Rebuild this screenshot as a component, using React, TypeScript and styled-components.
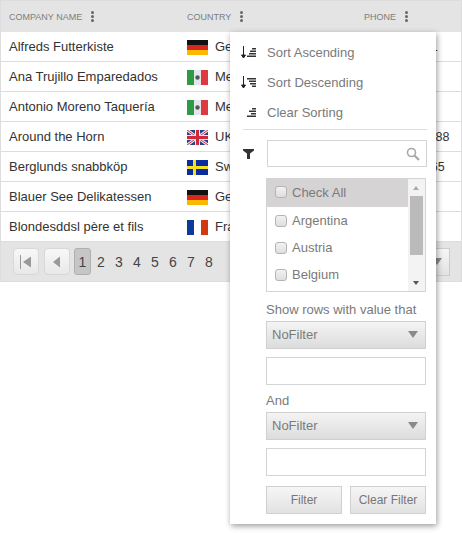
import React from "react";
import styled, { createGlobalStyle } from "styled-components";

const GlobalStyle = createGlobalStyle`
  html, body {
    margin: 0;
    padding: 0;
    background: #fff;
    font-family: "Liberation Sans", Arial, sans-serif;
  }
  * { box-sizing: border-box; }
`;

const customers = [
  { name: "Alfreds Futterkiste", flag: "de", country: "Germany", phone: "030-0074321" },
  { name: "Ana Trujillo Emparedados", flag: "mx", country: "Mexico", phone: "(5) 555-4729" },
  { name: "Antonio Moreno Taquería", flag: "mx", country: "Mexico", phone: "(5) 555-3932" },
  { name: "Around the Horn", flag: "uk", country: "UK", phone: "(171) 555-7788" },
  { name: "Berglunds snabbköp", flag: "se", country: "Sweden", phone: "0921-12 34 65" },
  { name: "Blauer See Delikatessen", flag: "de", country: "Germany", phone: "0621-08460" },
  { name: "Blondesddsl père et fils", flag: "fr", country: "France", phone: "88.60.15.31" },
];

const Page = styled.div`
  position: relative;
  width: 462px;
  height: 533px;
  overflow: hidden;
`;

const Grid = styled.div`
  border: 1px solid #ddd;
  width: 462px;
`;

const HeaderRow = styled.div`
  display: grid;
  grid-template-columns: 178px 177px 1fr;
  height: 31px;
  background: #e4e4e4;
`;

const HeaderCell = styled.div`
  display: flex;
  align-items: center;
  gap: 9px;
  padding-left: 8px;
  font-size: 9px;
  color: #7d7d7d;
`;

const Kebab = styled.span`
  display: flex;
  flex-direction: column;
  gap: 1px;
  i {
    width: 3px;
    height: 3px;
    border-radius: 50%;
    background: #666;
  }
`;

const Row = styled.div`
  display: grid;
  grid-template-columns: 178px 177px 1fr;
  height: 30px;
  border-bottom: 1px solid #ddd;
  font-size: 13px;
  color: #333;
  align-items: center;
`;

const Cell = styled.div`
  display: flex;
  align-items: center;
  padding-left: 8px;
  white-space: nowrap;
  overflow: hidden;
`;

const PhoneCell = styled(Cell)`
  font-size: 12.5px;
`;

const FlagBox = styled.svg`
  display: block;
  width: 21px;
  height: 15px;
  margin: 1px 7px 0 0;
  flex: none;
`;

const Flag = ({ code }: { code: string }) => (
  <FlagBox viewBox="0 0 21 15">
    {code === "de" && (
      <>
        <rect width="21" height="5" fill="#111" />
        <rect y="5" width="21" height="5" fill="#d8281c" />
        <rect y="10" width="21" height="5" fill="#fbb800" />
      </>
    )}
    {code === "mx" && (
      <>
        <rect width="7" height="15" fill="#2f9a46" />
        <rect x="7" width="7" height="15" fill="#e3e6ea" />
        <rect x="14" width="7" height="15" fill="#dc3a40" />
        <circle cx="10.5" cy="7.5" r="2.2" fill="#555" />
      </>
    )}
    {code === "uk" && (
      <>
        <rect width="21" height="15" fill="#2b3f86" />
        <path d="M0 0L21 15M21 0L0 15" stroke="#e8e8ee" strokeWidth="3" />
        <path d="M0 0L21 15M21 0L0 15" stroke="#d0384a" strokeWidth="1" />
        <path d="M10.5 0V15M0 7.5H21" stroke="#e8e8ee" strokeWidth="5" />
        <path d="M10.5 0V15M0 7.5H21" stroke="#d0283a" strokeWidth="3" />
      </>
    )}
    {code === "se" && (
      <>
        <rect width="21" height="15" fill="#0b2c9c" />
        <rect x="6" width="3" height="15" fill="#f5df20" />
        <rect y="6" width="21" height="3" fill="#f5df20" />
      </>
    )}
    {code === "fr" && (
      <>
        <rect width="7" height="15" fill="#0a3a9a" />
        <rect x="7" width="7" height="15" fill="#fff" />
        <rect x="14" width="7" height="15" fill="#d03a10" />
      </>
    )}
  </FlagBox>
);

const Pager = styled.div`
  display: flex;
  align-items: center;
  height: 39px;
  padding: 0 11px 0 12px;
  background: #e4e4e4;
`;

const PagerButton = styled.span`
  display: flex;
  align-items: center;
  justify-content: center;
  width: 26px;
  height: 27px;
  margin-right: 4px;
  border: 1px solid #d8d8d8;
  border-radius: 4px;
  background: linear-gradient(#f8f8f8, #e8e8e8);
  & + & {
    margin-left: 1px;
  }
`;

const PageNumber = styled.span<{ $current?: boolean }>`
  display: flex;
  align-items: center;
  justify-content: center;
  width: ${(p) => (p.$current ? "17px" : "18px")};
  height: 27px;
  margin-right: ${(p) => (p.$current ? "1px" : "0")};
  font-size: 14px;
  color: #444;
  border: ${(p) => (p.$current ? "1px solid #b0b0b0" : "none")};
  border-radius: 3px;
  background: ${(p) => (p.$current ? "#c6c6c6" : "transparent")};
`;

const PageSize = styled.span`
  margin-left: auto;
  display: flex;
  align-items: center;
  justify-content: flex-end;
  width: 60px;
  height: 28px;
  padding-right: 7px;
  border: 1px solid #ccc;
  background: linear-gradient(#f6f6f6, #e2e2e2);
`;

const Arrow = styled.span`
  width: 0;
  height: 0;
  border-left: 5px solid transparent;
  border-right: 5px solid transparent;
  border-top: 7px solid #8a8a8a;
`;

const Popup = styled.div`
  position: absolute;
  left: 230px;
  top: 32px;
  width: 206px;
  height: 492px;
  padding-top: 5px;
  background: #fff;
  box-shadow: 1px 2px 6px rgba(0, 0, 0, 0.4);
  color: #7a7a7a;
  font-size: 13px;
`;

const MenuItem = styled.div`
  display: flex;
  align-items: center;
  height: 30px;
  padding-left: 11px;
  gap: 10px;
`;

const MenuIcon = styled.svg`
  width: 16px;
  height: 13px;
  flex: none;
`;

const Divider = styled.div`
  height: 1px;
  margin: 2px 9px 10px 13px;
  background: #ddd;
`;

const SearchRow = styled.div`
  display: flex;
  align-items: center;
  padding-left: 13px;
  gap: 13px;
  margin-bottom: 11px;
`;

const SearchBox = styled.div`
  display: flex;
  align-items: center;
  justify-content: flex-end;
  width: 160px;
  height: 27px;
  padding-right: 6px;
  border: 1px solid #d4d4d4;
`;

const FilterBody = styled.div`
  display: flex;
  flex-direction: column;
  margin-left: 36px;
  width: 160px;
`;

const CheckList = styled.div`
  display: flex;
  height: 114px;
  border: 1px solid #d4d4d4;
  margin-bottom: 9px;
`;

const CheckItems = styled.div`
  flex: 1;
`;

const CheckRow = styled.div<{ $active?: boolean }>`
  display: flex;
  align-items: center;
  height: ${(p) => (p.$active ? "28px" : "27px")};
  padding: 0 0 ${(p) => (p.$active ? "2px" : "0")} 8px;
  gap: 5px;
  background: ${(p) => (p.$active ? "#d5d3d3" : "transparent")};
`;

const Checkbox = styled.span`
  width: 12px;
  height: 12px;
  border: 1px solid #b4b4b4;
  border-radius: 3px;
  background: linear-gradient(#f2f2f2, #dedede);
`;

const ScrollTrack = styled.div`
  position: relative;
  width: 17px;
  background: #f3f3f3;
`;

const ScrollThumb = styled.div`
  position: absolute;
  left: 2px;
  top: 17px;
  width: 13px;
  height: 59px;
  background: #bbb;
`;

const ScrollArrow = styled.span<{ $down?: boolean }>`
  position: absolute;
  left: 5px;
  ${(p) => (p.$down ? "bottom: 6px;" : "top: 7px;")}
  width: 0;
  height: 0;
  border-left: 3.5px solid transparent;
  border-right: 3.5px solid transparent;
  ${(p) => (p.$down ? "border-top: 4px solid #555;" : "border-bottom: 4px solid #aaa;")}
`;

const FieldLabel = styled.div`
  height: 20px;
  line-height: 18px;
`;

const SelectBox = styled.div`
  display: flex;
  align-items: center;
  justify-content: space-between;
  height: 28px;
  margin-bottom: 8px;
  padding: 0 7px 2px 5px;
  border: 1px solid #d0d0d0;
  background: linear-gradient(#f4f4f4, #dcdcdc);
`;

const TextBox = styled.input`
  display: block;
  width: 160px;
  height: 28px;
  padding: 0;
  margin-bottom: 7px;
  border: 1px solid #d4d4d4;
  background: #fff;
  outline: none;
`;

const Buttons = styled.div`
  display: flex;
  justify-content: space-between;
  margin-top: 3px;
`;

const ActionButton = styled.button`
  width: 76px;
  height: 28px;
  padding: 0;
  border: 1px solid #d0d0d0;
  background: linear-gradient(#f6f6f6, #e2e2e2);
  font: inherit;
  font-size: 12px;
  color: #777;
`;

const SortIcon = ({ bars, arrow }: { bars: number[]; arrow: boolean }) => (
  <MenuIcon viewBox="0 0 16 13">
    {arrow && <path d="M2.5 0V11M0.5 9L2.5 12L4.5 9Z" stroke="#222" strokeWidth="1" fill="#222" />}
    {bars.map((w, i) => (
      <rect key={i} x={15 - w} y={2 + i * 2.5} width={w} height="1.5" fill="#333" />
    ))}
  </MenuIcon>
);

const App = () => (
  <Page>
    <GlobalStyle />
    <Grid>
      <HeaderRow>
        {["COMPANY NAME", "COUNTRY", "PHONE"].map((title) => (
          <HeaderCell key={title}>
            {title}
            <Kebab>
              <i />
              <i />
              <i />
            </Kebab>
          </HeaderCell>
        ))}
      </HeaderRow>
      {customers.map((c) => (
        <Row key={c.name}>
          <Cell>{c.name}</Cell>
          <Cell>
            <Flag code={c.flag} />
            {c.country}
          </Cell>
          <PhoneCell>{c.phone}</PhoneCell>
        </Row>
      ))}
      <Pager>
        <PagerButton>
          <svg width="14" height="14" viewBox="0 0 14 14">
            <rect x="1" y="0" width="1" height="14" fill="#999" />
            <path d="M12 1.5V12.5L4 7Z" fill="#999" />
          </svg>
        </PagerButton>
        <PagerButton>
          <svg width="10" height="12" viewBox="0 0 10 12">
            <path d="M8 0.5V11.5L1 6Z" fill="#999" />
          </svg>
        </PagerButton>
        {[1, 2, 3, 4, 5, 6, 7, 8].map((n) => (
          <PageNumber key={n} $current={n === 1}>
            {n}
          </PageNumber>
        ))}
        <PageSize>
          <Arrow />
        </PageSize>
      </Pager>
    </Grid>
    <Popup>
      <MenuItem>
        <SortIcon bars={[4, 6, 7, 9]} arrow />
        Sort Ascending
      </MenuItem>
      <MenuItem>
        <SortIcon bars={[9, 7, 6, 4]} arrow />
        Sort Descending
      </MenuItem>
      <MenuItem>
        <SortIcon bars={[4, 7, 5, 9]} arrow={false} />
        Clear Sorting
      </MenuItem>
      <Divider />
      <SearchRow>
        <svg width="11" height="10" viewBox="0 0 11 10">
          <path d="M0 0H11V1.5L7 4.5V10H4V4.5L0 1.5Z" fill="#333" />
        </svg>
        <SearchBox>
          <svg width="14" height="14" viewBox="0 0 14 14">
            <circle cx="5.5" cy="5.5" r="4" fill="none" stroke="#a8a8a8" strokeWidth="1.6" />
            <path d="M8.5 8.5L13 13" stroke="#a8a8a8" strokeWidth="2.2" />
          </svg>
        </SearchBox>
      </SearchRow>
      <FilterBody>
        <CheckList>
          <CheckItems>
            {["Check All", "Argentina", "Austria", "Belgium"].map((label, i) => (
              <CheckRow key={label} $active={i === 0}>
                <Checkbox />
                {label}
              </CheckRow>
            ))}
          </CheckItems>
          <ScrollTrack>
            <ScrollArrow />
            <ScrollThumb />
            <ScrollArrow $down />
          </ScrollTrack>
        </CheckList>
        <FieldLabel>Show rows with value that</FieldLabel>
        <SelectBox>
          NoFilter
          <Arrow />
        </SelectBox>
        <TextBox />
        <FieldLabel>And</FieldLabel>
        <SelectBox>
          NoFilter
          <Arrow />
        </SelectBox>
        <TextBox />
        <Buttons>
          <ActionButton>Filter</ActionButton>
          <ActionButton>Clear Filter</ActionButton>
        </Buttons>
      </FilterBody>
    </Popup>
  </Page>
);

export default App;
